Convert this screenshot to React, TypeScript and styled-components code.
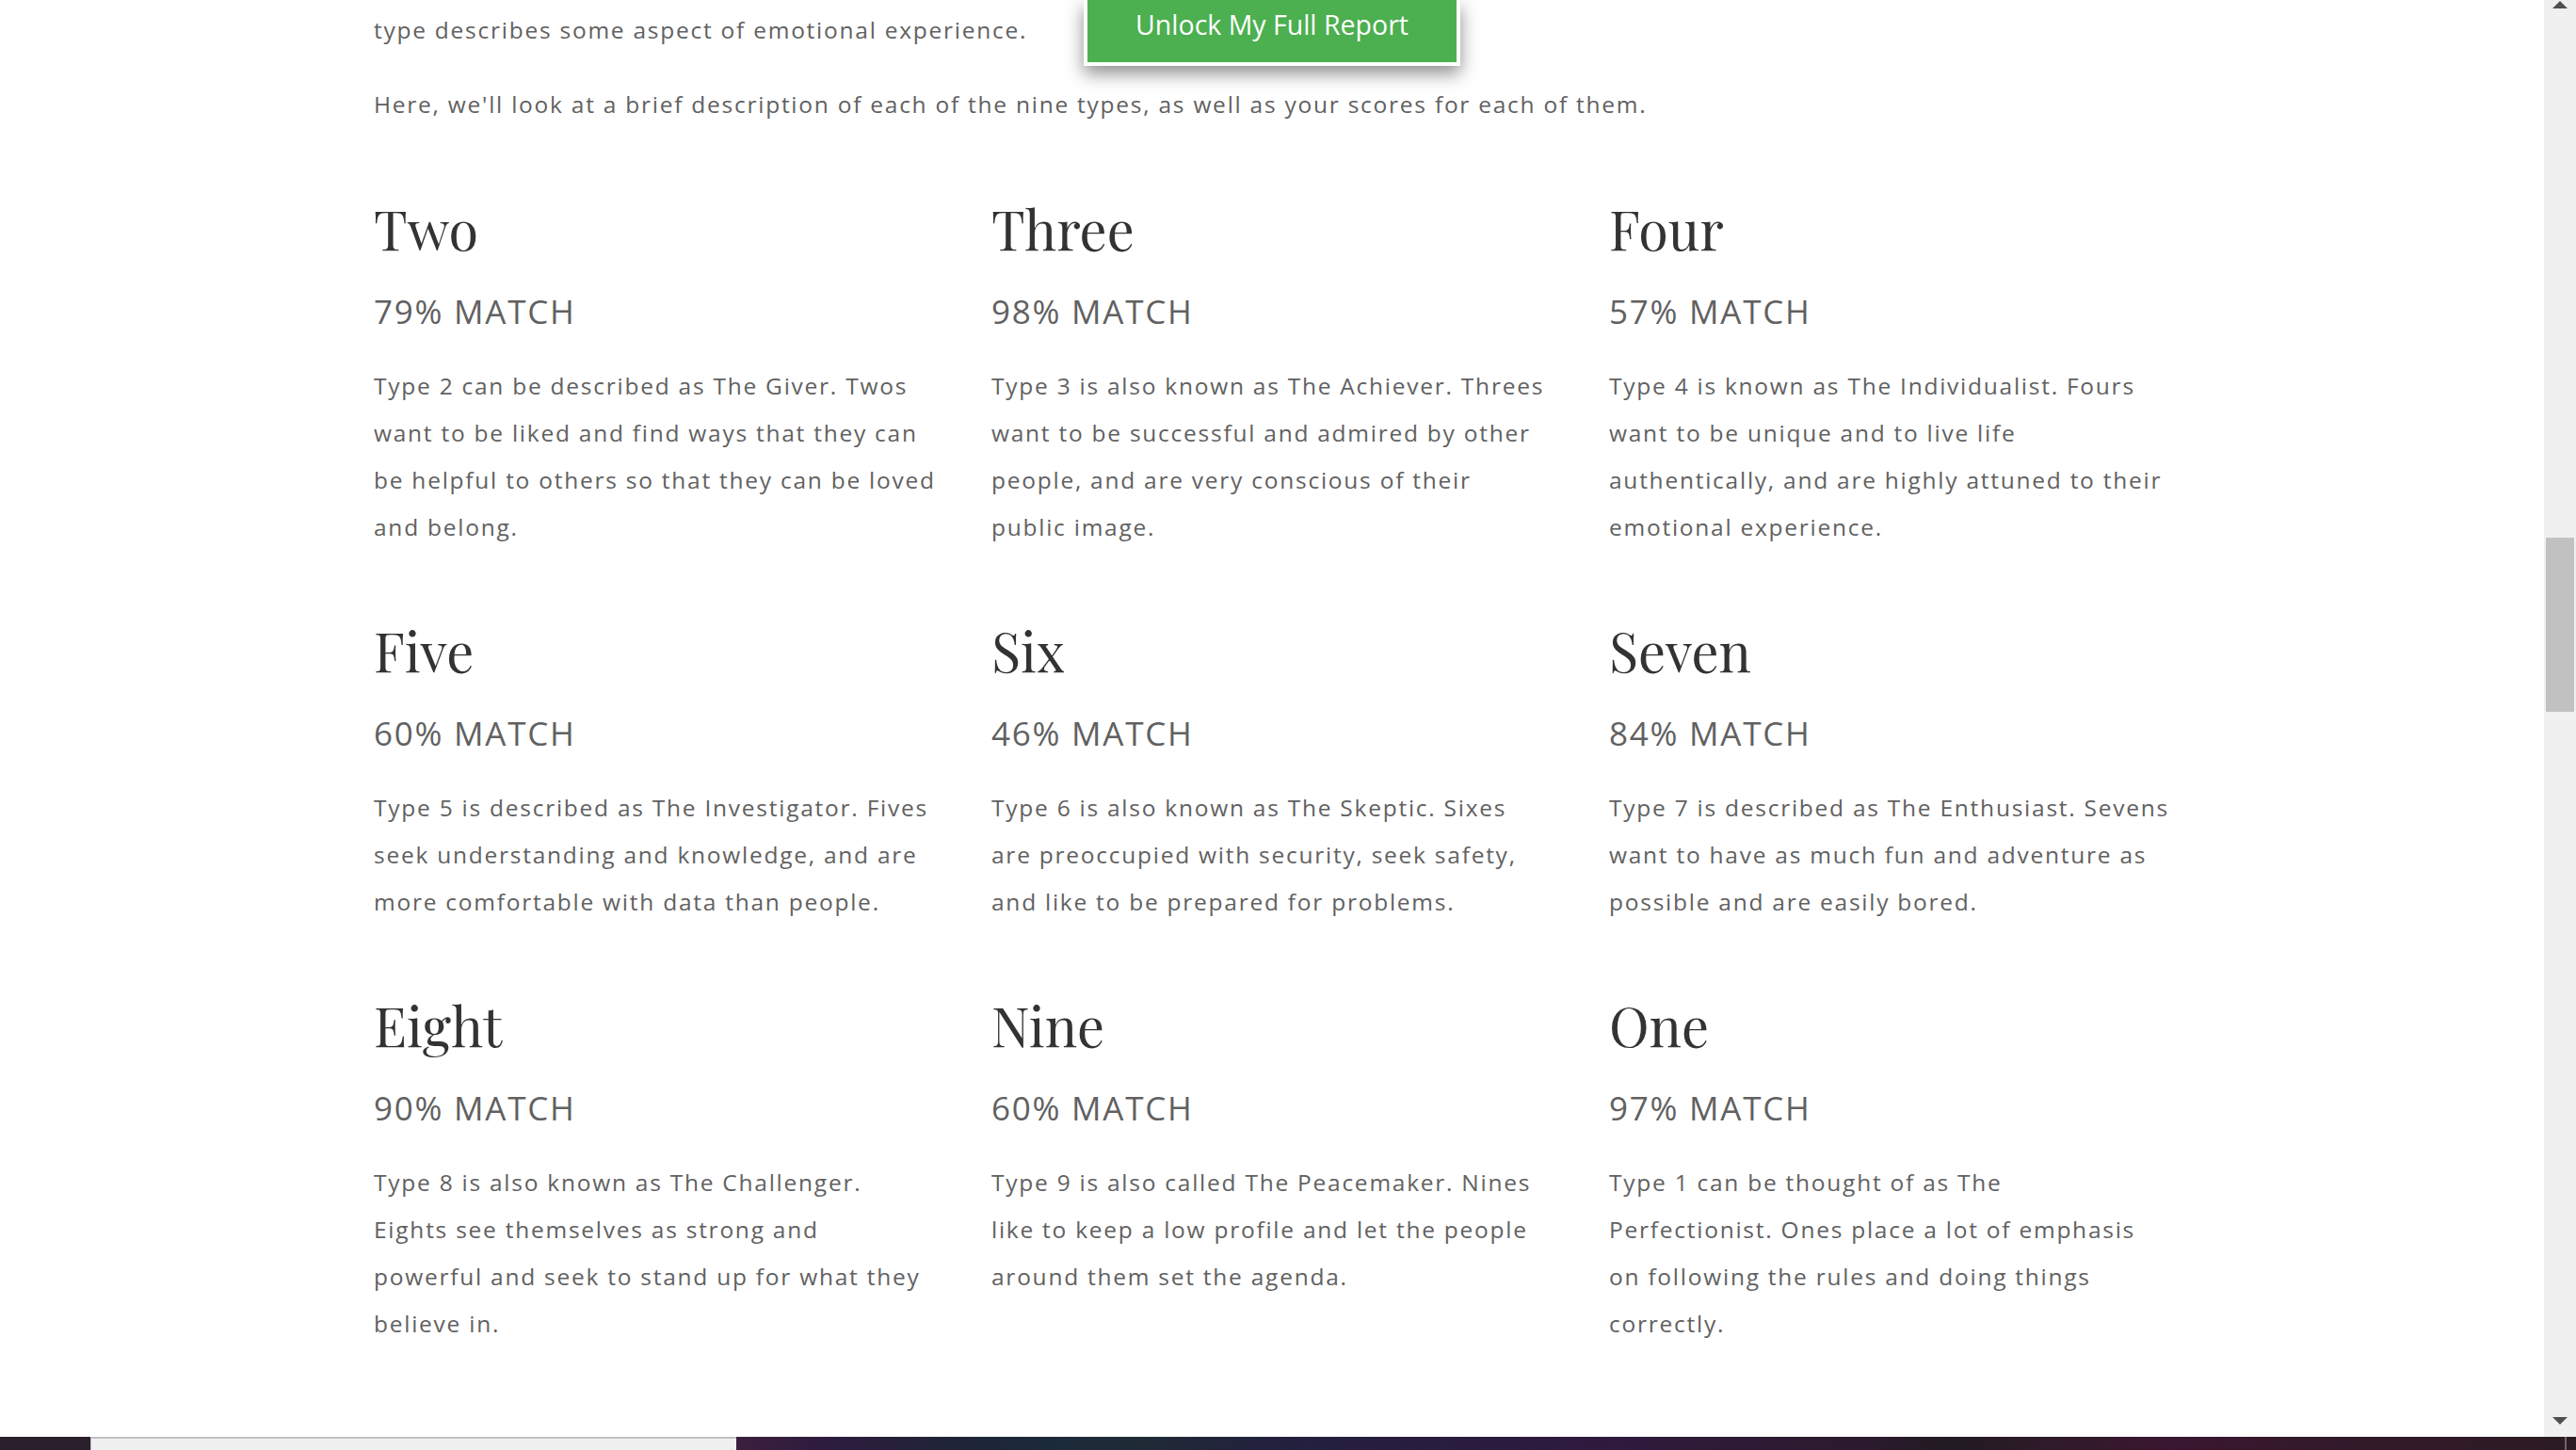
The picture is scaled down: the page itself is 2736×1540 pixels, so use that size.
import React from "react";
import styled, { createGlobalStyle } from "styled-components";

const GlobalStyle = createGlobalStyle`
  html, body {
    margin: 0;
    padding: 0;
    background: #ffffff;
    overflow: hidden;
  }
  * { box-sizing: border-box; }
`;

const Screen = styled.div`
  width: 2736px;
  height: 1540px;
  display: flex;
  flex-direction: column;
  overflow: hidden;
`;

const Viewport = styled.div`
  flex: 1;
  display: flex;
  min-height: 0;
`;

const Main = styled.main`
  flex: 1;
  position: relative;
  overflow: hidden;
  background: #ffffff;
`;

const Container = styled.div`
  width: 1914px;
  margin: 0 auto;
  padding: 7px 0 0 3px;
  font-family: "Open Sans", "Liberation Sans", sans-serif;
  color: #616161;
`;

const Paragraph = styled.p<{ $gap?: number }>`
  margin: 0 0 ${(p) => p.$gap ?? 0}px;
  font-size: 24.5px;
  line-height: 50px;
  letter-spacing: 1.75px;
`;

const TypeGrid = styled.section`
  display: grid;
  grid-template-columns: repeat(3, 599px);
  column-gap: 57px;
  row-gap: 65px;
  margin-top: 66px;
`;

const Card = styled.article`
  display: flex;
  flex-direction: column;
`;

const TypeName = styled.h2`
  margin: 0;
  font-family: "Playfair Display", "Liberation Serif", serif;
  font-weight: 400;
  font-size: 57.5px;
  line-height: 80px;
  color: #333333;
`;

const MatchLine = styled.h3`
  margin: 24px 0 0;
  font-family: "Open Sans", "Liberation Sans", sans-serif;
  font-weight: 400;
  font-size: 35px;
  line-height: 50px;
  letter-spacing: 1.75px;
  text-transform: uppercase;
  color: #616161;
`;

const Description = styled.p`
  margin: 29px 0 0;
  font-size: 24.5px;
  line-height: 50px;
  letter-spacing: 1.75px;
  white-space: nowrap;
  color: #616161;
`;

const UnlockButton = styled.button`
  position: absolute;
  top: 0;
  left: 50%;
  transform: translateX(-50%);
  width: 400px;
  padding: 0 0 14px;
  border: 4px solid #ffffff;
  border-top: none;
  background: #4caf50;
  color: #ffffff;
  font-family: "Open Sans", "Liberation Sans", sans-serif;
  font-size: 28.5px;
  line-height: 52px;
  white-space: nowrap;
  box-shadow: 0 8px 18px rgba(0, 0, 0, 0.45);
  cursor: pointer;
`;

const Scrollbar = styled.aside`
  width: 34px;
  background: #f0f0f0;
  display: flex;
  flex-direction: column;
  align-items: center;
`;

const Arrow = styled.div<{ $down?: boolean }>`
  width: 0;
  height: 0;
  border-left: 8px solid transparent;
  border-right: 8px solid transparent;
  ${(p) =>
    p.$down
      ? "border-top: 8px solid #505050; margin-bottom: 13px;"
      : "border-bottom: 8px solid #505050; margin-top: 1px;"}
`;

const Track = styled.div`
  flex: 1;
  width: 100%;
  padding: 562px 2px 0;
`;

const Thumb = styled.div`
  height: 185px;
  background: #c1c1c1;
`;

const Band = styled.footer`
  height: 14px;
  display: flex;
`;

const BandDark = styled.div`
  width: 96px;
  background: #2a1f2a;
`;

const BandLight = styled.div`
  width: 686px;
  background: #f0f0f0;
  border-top: 2px solid #c0c0c0;
  border-left: 1px solid #bdbdbd;
`;

const BandGradient = styled.div`
  flex: 1;
  position: relative;
  background: linear-gradient(
    90deg,
    #3c1f3e 0%,
    #2d1c3d 5%,
    #1f2438 12%,
    #1b2a3a 17%,
    #1f2a36 22%,
    #23203e 30%,
    #2a1c40 40%,
    #301a3d 48%,
    #2e1a33 56%,
    #2a1a2c 62%,
    #221b22 66%,
    #301a2a 72%,
    #3a1630 78%,
    #33192a 86%,
    #2c1b22 100%
  );
  &::after {
    content: "";
    position: absolute;
    right: 10px;
    top: 0;
    bottom: 0;
    width: 2px;
    background: #6a6a6a;
  }
`;

type EnneaType = { name: string; match: number; lines: string[] };

const types: EnneaType[] = [
  {
    name: "Two",
    match: 79,
    lines: [
      "Type 2 can be described as The Giver. Twos",
      "want to be liked and find ways that they can",
      "be helpful to others so that they can be loved",
      "and belong.",
    ],
  },
  {
    name: "Three",
    match: 98,
    lines: [
      "Type 3 is also known as The Achiever. Threes",
      "want to be successful and admired by other",
      "people, and are very conscious of their",
      "public image.",
    ],
  },
  {
    name: "Four",
    match: 57,
    lines: [
      "Type 4 is known as The Individualist. Fours",
      "want to be unique and to live life",
      "authentically, and are highly attuned to their",
      "emotional experience.",
    ],
  },
  {
    name: "Five",
    match: 60,
    lines: [
      "Type 5 is described as The Investigator. Fives",
      "seek understanding and knowledge, and are",
      "more comfortable with data than people.",
    ],
  },
  {
    name: "Six",
    match: 46,
    lines: [
      "Type 6 is also known as The Skeptic. Sixes",
      "are preoccupied with security, seek safety,",
      "and like to be prepared for problems.",
    ],
  },
  {
    name: "Seven",
    match: 84,
    lines: [
      "Type 7 is described as The Enthusiast. Sevens",
      "want to have as much fun and adventure as",
      "possible and are easily bored.",
    ],
  },
  {
    name: "Eight",
    match: 90,
    lines: [
      "Type 8 is also known as The Challenger.",
      "Eights see themselves as strong and",
      "powerful and seek to stand up for what they",
      "believe in.",
    ],
  },
  {
    name: "Nine",
    match: 60,
    lines: [
      "Type 9 is also called The Peacemaker. Nines",
      "like to keep a low profile and let the people",
      "around them set the agenda.",
    ],
  },
  {
    name: "One",
    match: 97,
    lines: [
      "Type 1 can be thought of as The",
      "Perfectionist. Ones place a lot of emphasis",
      "on following the rules and doing things",
      "correctly.",
    ],
  },
];

export default function App() {
  return (
    <>
      <GlobalStyle />
      <Screen>
        <Viewport>
          <Main>
            <Container>
              <Paragraph $gap={29}>type describes some aspect of emotional experience.</Paragraph>
              <Paragraph>
                Here, we'll look at a brief description of each of the nine types, as well as your
                scores for each of them.
              </Paragraph>
              <TypeGrid>
                {types.map((t) => (
                  <Card key={t.name}>
                    <TypeName>{t.name}</TypeName>
                    <MatchLine>{t.match}% Match</MatchLine>
                    <Description>
                      {t.lines.map((line, i) => (
                        <React.Fragment key={i}>
                          {i > 0 && <br />}
                          {line}
                        </React.Fragment>
                      ))}
                    </Description>
                  </Card>
                ))}
              </TypeGrid>
            </Container>
            <UnlockButton type="button">Unlock My Full Report</UnlockButton>
          </Main>
          <Scrollbar>
            <Arrow />
            <Track>
              <Thumb />
            </Track>
            <Arrow $down />
          </Scrollbar>
        </Viewport>
        <Band>
          <BandDark />
          <BandLight />
          <BandGradient />
        </Band>
      </Screen>
    </>
  );
}
